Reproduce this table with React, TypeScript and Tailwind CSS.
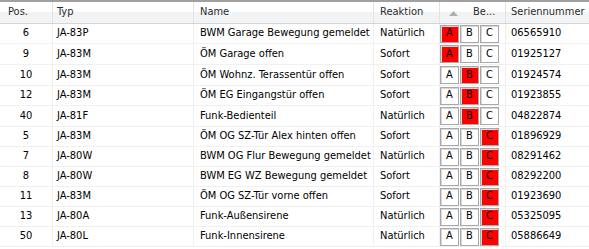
import React from "react";

type Row = { pos: string; typ: string; name: string; reak: string; active: "A" | "B" | "C"; sn: string; h: number };

const rows: Row[] = [
  { pos: "6", typ: "JA-83P", name: "BWM Garage Bewegung gemeldet", reak: "Natürlich", active: "A", sn: "06565910", h: 20 },
  { pos: "9", typ: "JA-83M", name: "ÖM Garage offen", reak: "Sofort", active: "A", sn: "01925127", h: 21 },
  { pos: "10", typ: "JA-83M", name: "ÖM Wohnz. Terassentür offen", reak: "Sofort", active: "B", sn: "01924574", h: 21 },
  { pos: "12", typ: "JA-83M", name: "ÖM EG Eingangstür offen", reak: "Sofort", active: "B", sn: "01923855", h: 20 },
  { pos: "40", typ: "JA-81F", name: "Funk-Bedienteil", reak: "Natürlich", active: "B", sn: "04822874", h: 21 },
  { pos: "5", typ: "JA-83M", name: "ÖM OG SZ-Tür Alex hinten offen", reak: "Sofort", active: "C", sn: "01896929", h: 20 },
  { pos: "7", typ: "JA-80W", name: "BWM OG Flur Bewegung gemeldet", reak: "Natürlich", active: "C", sn: "08291462", h: 20 },
  { pos: "8", typ: "JA-80W", name: "BWM EG WZ Bewegung gemeldet", reak: "Sofort", active: "C", sn: "08292200", h: 20 },
  { pos: "11", typ: "JA-83M", name: "ÖM OG SZ-Tür vorne offen", reak: "Sofort", active: "C", sn: "01923690", h: 20 },
  { pos: "13", typ: "JA-80A", name: "Funk-Außensirene", reak: "Natürlich", active: "C", sn: "05325095", h: 20 },
  { pos: "50", typ: "JA-80L", name: "Funk-Innensirene", reak: "Natürlich", active: "C", sn: "05886649", h: 20 },
];

function Box({ letter, on }: { letter: string; on: boolean }) {
  return (
    <div
      className={
        "w-[19px] h-[18px] border border-[#a8a8a8] flex items-center justify-center shadow-[inset_1px_1px_0_#d8d8d8] " +
        (on ? "bg-[#ff0000]" : "bg-white")
      }
    >
      {letter}
    </div>
  );
}

export default function App() {
  return (
    <div
      className="w-[589px] h-[249px] bg-white overflow-hidden text-[11px] text-black"
      style={{ fontFamily: '"DejaVu Sans Condensed", "Liberation Sans", Arial, sans-serif' }}
    >
      <div className="h-[2px] bg-[#a0a0a0]" />
      <div className="flex h-[22px] border-b border-[#d5d5d5] bg-[linear-gradient(to_bottom,#ffffff_0%,#ffffff_45%,#f2f3f5_50%,#f2f3f5_100%)] text-[#2b2b2b]">
        <div className="w-[53px] border-r border-[#e3e3e3] pl-[8px] flex items-center">Pos.</div>
        <div className="w-[141px] border-r border-[#e3e3e3] pl-[4px] flex items-center">Typ</div>
        <div className="w-[180px] border-r border-[#e3e3e3] pl-[6px] flex items-center">Name</div>
        <div className="w-[66px] border-r border-[#e3e3e3] pl-[6px] flex items-center">Reaktion</div>
        <div className="w-[66px] border-r border-[#e3e3e3] flex items-center relative">
          <svg className="absolute left-[9px] top-[9px]" width="9" height="5" viewBox="0 0 9 5">
            <polygon points="0,5 9,5 4.5,0" fill="#a9b3b0" />
          </svg>
          <span className="pl-[33px]">Be...</span>
        </div>
        <div className="flex-1 pl-[5px] flex items-center">Seriennummer</div>
      </div>
      {rows.map((r) => (
        <div key={r.pos} className="flex border-b border-[#f0f0f0]" style={{ height: r.h }}>
          <div className="w-[53px] border-r border-[#f0f0f0] flex items-center justify-center">{r.pos}</div>
          <div className="w-[141px] border-r border-[#f0f0f0] pl-[4px] flex items-center">{r.typ}</div>
          <div className="w-[180px] border-r border-[#f0f0f0] pl-[6px] flex items-center whitespace-nowrap">{r.name}</div>
          <div className="w-[66px] border-r border-[#f0f0f0] pl-[6px] flex items-center">{r.reak}</div>
          <div className="w-[66px] border-r border-[#f0f0f0] flex items-center gap-px">
            <Box letter="A" on={r.active === "A"} />
            <Box letter="B" on={r.active === "B"} />
            <Box letter="C" on={r.active === "C"} />
          </div>
          <div className="flex-1 pl-[5px] flex items-center">{r.sn}</div>
        </div>
      ))}
    </div>
  );
}
